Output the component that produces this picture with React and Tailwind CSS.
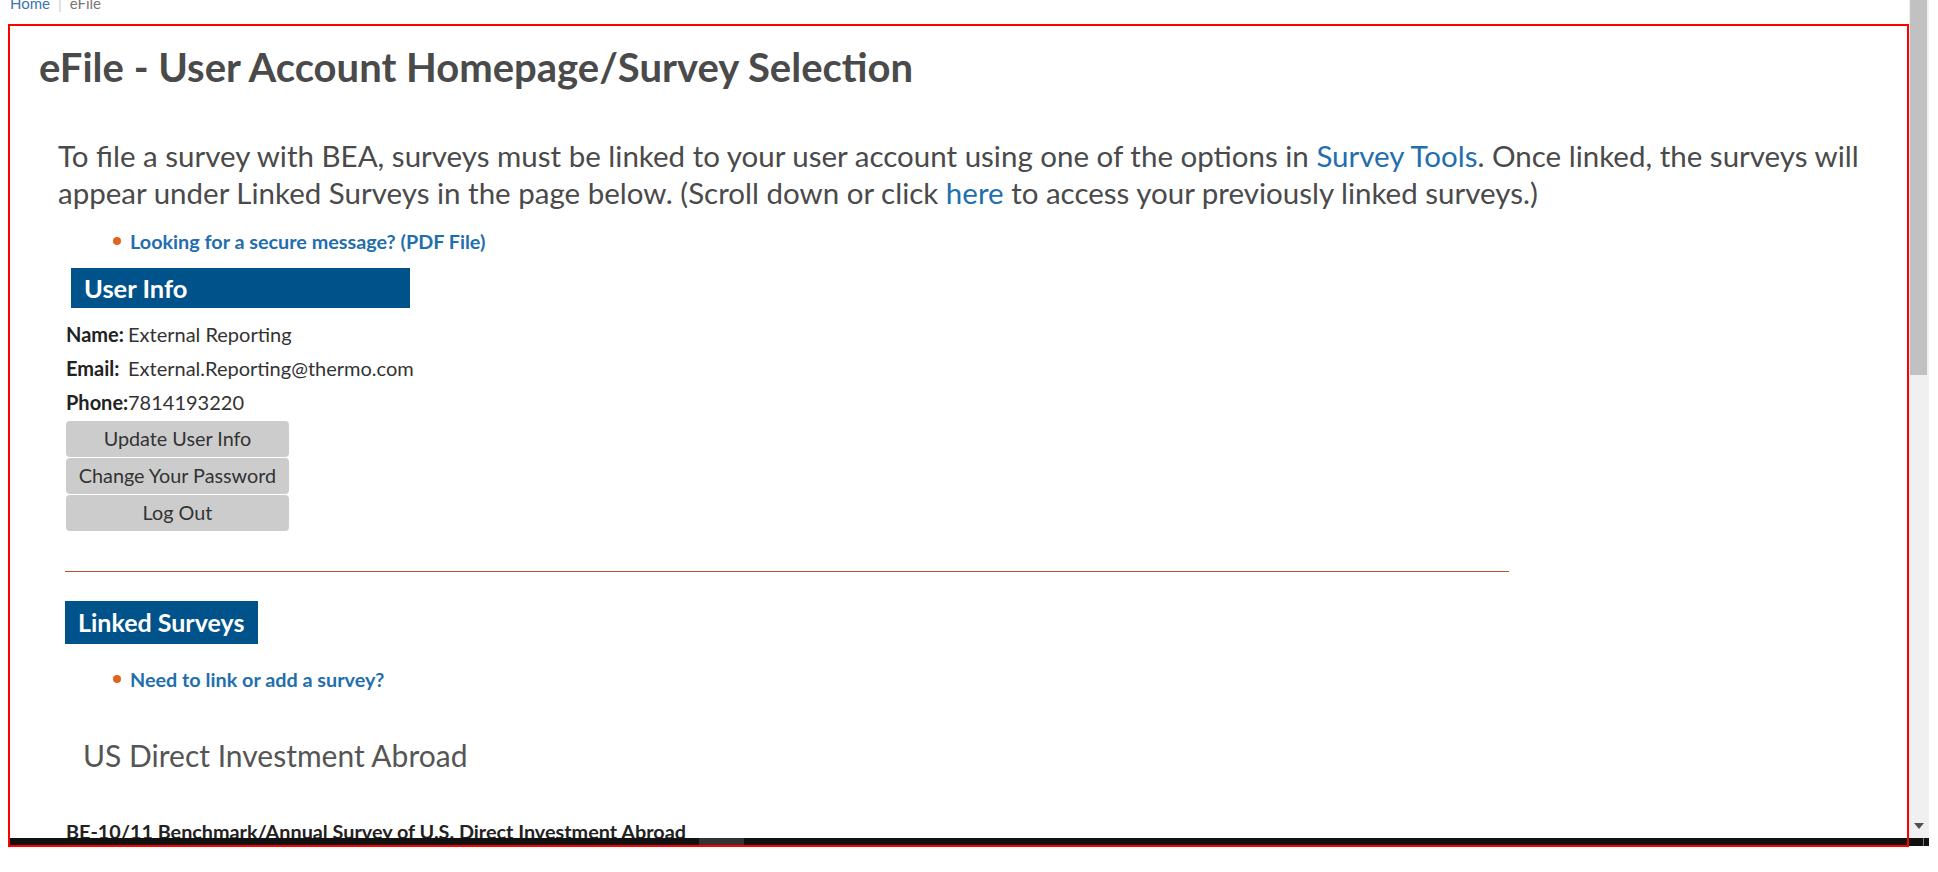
import React from "react";

const Bullet = ({ children }) => (
  <div className="flex items-center h-[24px] ml-[103px]">
    <span className="w-[8px] h-[8px] rounded-full bg-[#e0641e] mr-[9px]" />
    <a className="text-[19.8px] leading-[24px] font-bold text-[#1f6ead]">{children}</a>
  </div>
);

const InfoRow = ({ label, value }) => (
  <div className="flex items-center h-[34px] ml-[56px] text-[20px] text-[#333] whitespace-nowrap">
    <span className="w-[62px] font-bold text-[#222]">{label}</span>
    <span>{value}</span>
  </div>
);

const GreyButton = ({ children, first }) => (
  <button
    className={
      (first ? "mt-[2px] " : "mt-[1px] ") +
      "block ml-[56px] w-[223px] h-[36px] rounded-[4px] bg-[#cccccc] text-[19.8px] text-[#333] text-center"
    }
  >
    {children}
  </button>
);

export default function App() {
  return (
    <div className="relative w-[1938px] h-[872px] overflow-hidden bg-white [font-family:Lato,sans-serif]">
      <div className="w-[1909px] h-[847px] overflow-hidden">
        {/* breadcrumb, scrolled partly out of view */}
        <div className="h-[24px] overflow-hidden">
          <div className="-mt-[6px] ml-[10px] flex items-center text-[15px] leading-[18px]">
            <a className="text-[#3a75b0]">Home</a>
            <span className="mx-[8px] text-[#cccccc]">|</span>
            <span className="text-[#777]">eFile</span>
          </div>
        </div>

        {/* main framed panel */}
        <div className="relative ml-[8px] w-[1901px] h-[823px] border-2 border-[#ff0000] overflow-hidden">
          <h1 className="mt-[18px] ml-[29px] text-[40px] leading-[46px] font-bold text-[#4a4a4a]">
            eFile - User Account Homepage/Survey Selection
          </h1>

          <p className="mt-[47px] ml-[48px] text-[29.5px] leading-[37px] text-[#4a4a4a] whitespace-nowrap">
            To file a survey with BEA, surveys must be linked to your user account using one of the options in{" "}
            <a className="text-[#1f6ead]">Survey Tools</a>. Once linked, the surveys will
            <br />
            appear under Linked Surveys in the page below. (Scroll down or click{" "}
            <a className="text-[#1f6ead]">here</a> to access your previously linked surveys.)
          </p>

          <div className="mt-[18px]">
            <Bullet>Looking for a secure message? (PDF File)</Bullet>
          </div>

          {/* User Info */}
          <div className="mt-[15px] ml-[61px] w-[339px] h-[40px] bg-[#00528a] flex items-center pl-[13px]">
            <span className="text-[25.5px] font-bold text-white">User Info</span>
          </div>
          <div className="mt-[9px]">
            <InfoRow label="Name:" value="External Reporting" />
            <InfoRow label="Email:" value="External.Reporting@thermo.com" />
            <InfoRow label="Phone:" value="7814193220" />
          </div>
          <GreyButton first>Update User Info</GreyButton>
          <GreyButton>Change Your Password</GreyButton>
          <GreyButton>Log Out</GreyButton>

          <div className="mt-[40px] ml-[55px] w-[1444px] h-[1px] bg-[#b4532a]" />

          {/* Linked Surveys */}
          <div className="mt-[29px] ml-[55px] w-[193px] h-[43px] bg-[#00528a] flex items-center pl-[13px]">
            <span className="text-[25px] font-bold text-white">Linked Surveys</span>
          </div>
          <div className="mt-[23px]">
            <Bullet>Need to link or add a survey?</Bullet>
          </div>

          <h2 className="mt-[44px] ml-[73px] text-[30px] leading-[40px] text-[#555]">
            US Direct Investment Abroad
          </h2>

          <div className="mt-[44px] ml-[56px] text-[19.8px] leading-[24px] font-bold text-[#222]">
            BE-10/11 Benchmark/Annual Survey of U.S. Direct Investment Abroad
          </div>

          {/* dark horizontal scrollbar strip */}
          <div className="absolute left-0 right-0 bottom-0 h-[7px] bg-[#111111]">
            <div className="absolute left-[689px] top-0 w-[45px] h-[7px] bg-[#333333]" />
          </div>
        </div>
      </div>

      {/* window scrollbar */}
      <div className="absolute left-[1909px] top-0 w-[20px] h-[838px] bg-[#f0f0f0]">
        <div className="ml-[1px] w-[17px] h-[375px] bg-[#c1c1c1]" />
        <svg className="absolute left-[5px] top-[823px]" width="10" height="7" viewBox="0 0 10 7">
          <path d="M0 0 L10 0 L5 6 Z" fill="#505050" />
        </svg>
      </div>
      <div className="absolute left-[1909px] top-[838px] w-[20px] h-[8px] bg-[#111111]">
        <div className="absolute left-[14px] top-0 w-[1px] h-[8px] bg-[#777]" />
      </div>
    </div>
  );
}
